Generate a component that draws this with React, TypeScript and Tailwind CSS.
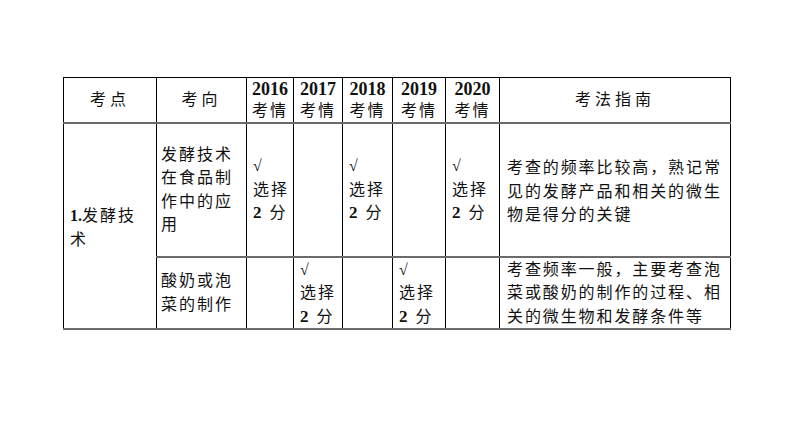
const serif = "font-['Liberation_Serif','Noto_Sans_CJK_SC',serif]";

function Tick({ lines }: { lines: boolean }) {
  if (!lines) return null;
  return (
    <div>
      <div>√</div>
      <div>选择</div>
      <div>
        <b className="text-[17px]">2</b> 分
      </div>
    </div>
  );
}

function Year({ y }: { y: string }) {
  return (
    <th className="border-x border-black border-t border-b-2 border-b-[#6b6b6b] p-0 text-center align-middle font-normal leading-[21px]">
      <div className="text-[18px] font-bold tracking-normal">{y}</div>
      <div>考情</div>
    </th>
  );
}

export default function App() {
  const row1 = [true, false, true, false, true];
  const row2 = [false, true, false, true, false];
  const cell = "border-x border-black border-y-2 border-y-[#6b6b6b] px-[6px] align-middle";

  return (
    <div className={`min-h-[447px] w-[794px] bg-white pl-[63px] pt-[77px] text-[16px] tracking-[2px] text-[#111] ${serif}`}>
      <table className="w-[667px] table-fixed border-collapse">
        <colgroup>
          <col className="w-[93px]" />
          <col className="w-[90px]" />
          <col className="w-[47px]" />
          <col className="w-[49px]" />
          <col className="w-[50px]" />
          <col className="w-[53px]" />
          <col className="w-[54px]" />
          <col className="w-[231px]" />
        </colgroup>
        <thead>
          <tr className="h-[45px]">
            <th className="border-x border-black border-t border-b-2 border-b-[#6b6b6b] text-center font-normal tracking-[4px]">考点</th>
            <th className="border-x border-black border-t border-b-2 border-b-[#6b6b6b] text-center font-normal tracking-[4px]">考向</th>
            <Year y="2016" />
            <Year y="2017" />
            <Year y="2018" />
            <Year y="2019" />
            <Year y="2020" />
            <th className="border-x border-black border-t border-b-2 border-b-[#6b6b6b] text-center font-normal tracking-[4px]">考法指南</th>
          </tr>
        </thead>
        <tbody className="leading-[23.5px]">
          <tr className="h-[134px]">
            <td rowSpan={2} className={`${cell} whitespace-nowrap pt-[4px]`}>
              <b className="tracking-normal">1.</b>发酵技
              <br />术
            </td>
            <td className={`${cell} whitespace-nowrap pl-[4px]`}>
              发酵技术
              <br />在食品制
              <br />作中的应
              <br />用
            </td>
            {row1.map((v, i) => (
              <td key={i} className={`${cell} whitespace-nowrap`}>
                <Tick lines={v} />
              </td>
            ))}
            <td className={`${cell} whitespace-nowrap pl-[7px] pt-[4px] tracking-[1.9px]`}>
              考查的频率比较高，熟记常
              <br />见的发酵产品和相关的微生
              <br />物是得分的关键
            </td>
          </tr>
          <tr className="h-[72px]">
            <td className={`${cell} whitespace-nowrap pl-[4px]`}>
              酸奶或泡
              <br />菜的制作
            </td>
            {row2.map((v, i) => (
              <td key={i} className={`${cell} whitespace-nowrap`}>
                <Tick lines={v} />
              </td>
            ))}
            <td className={`${cell} whitespace-nowrap pl-[7px] tracking-[1.9px]`}>
              考查频率一般，主要考查泡
              <br />菜或酸奶的制作的过程、相
              <br />关的微生物和发酵条件等
            </td>
          </tr>
        </tbody>
      </table>
    </div>
  );
}
